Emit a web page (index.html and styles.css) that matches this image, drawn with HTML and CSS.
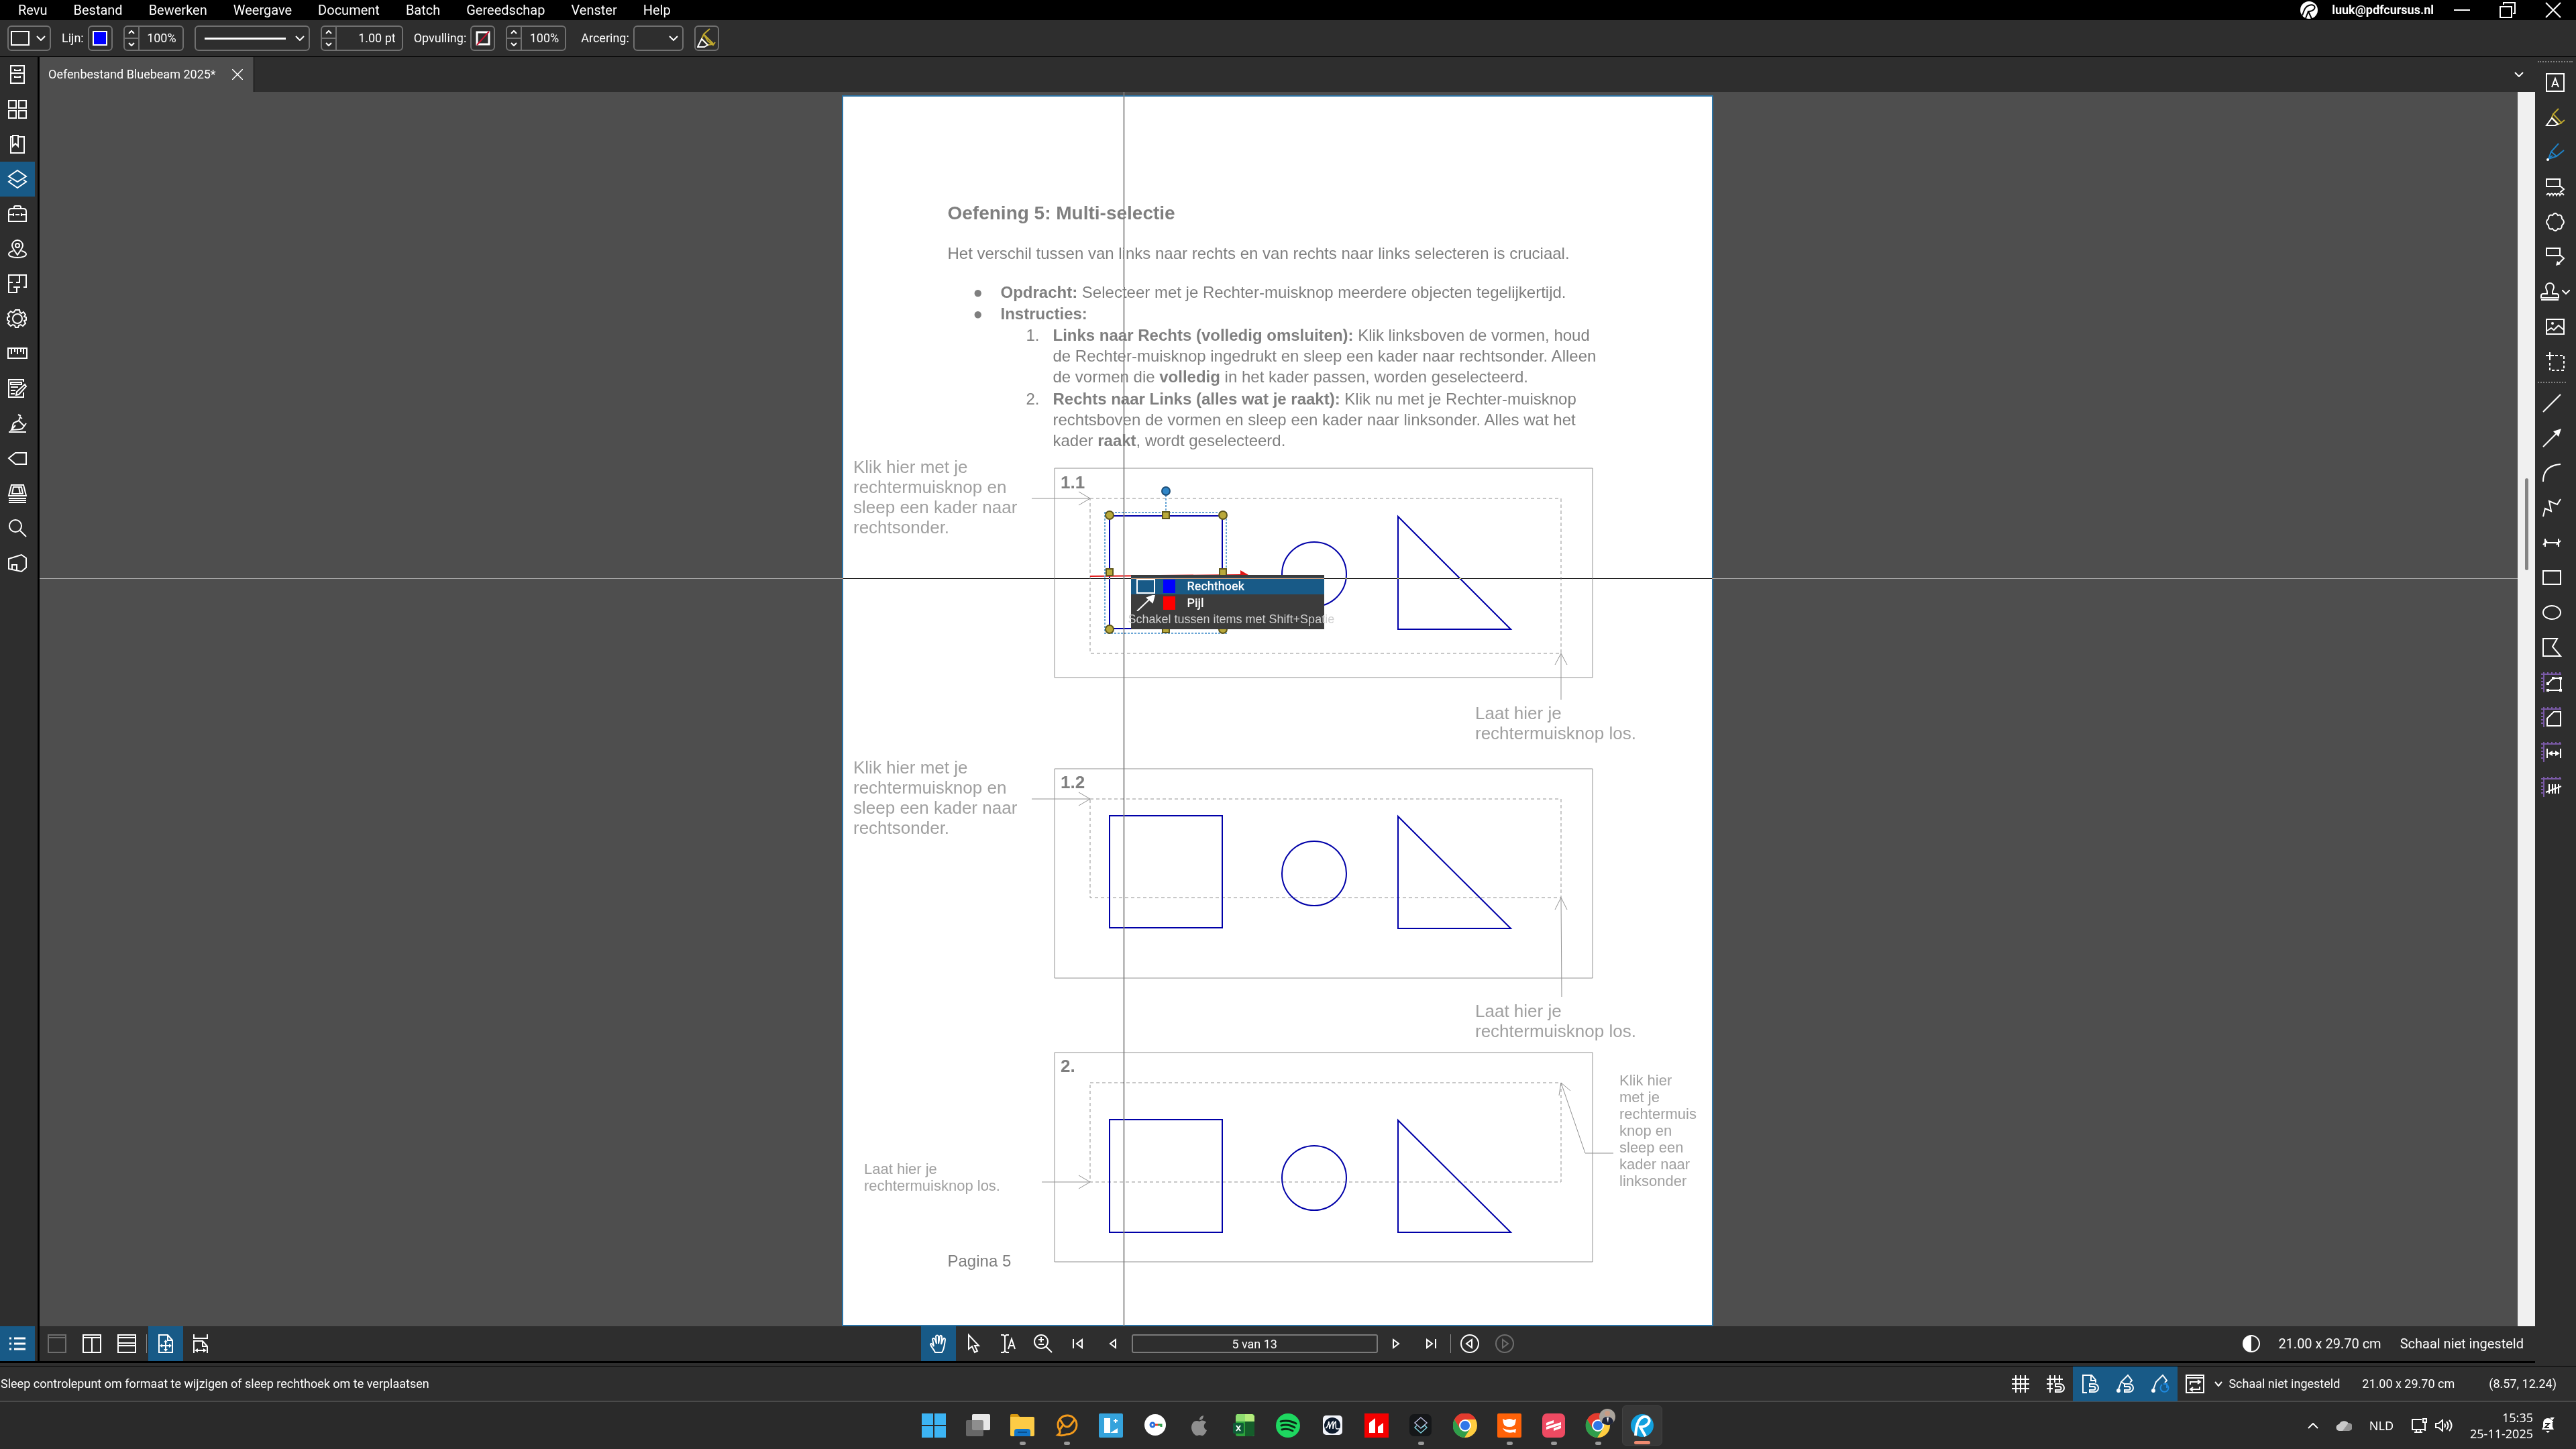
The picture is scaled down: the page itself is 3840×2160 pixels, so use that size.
FILE: index.html
```html
<!DOCTYPE html>
<html lang="nl">
<head>
<meta charset="utf-8">
<title>Oefenbestand Bluebeam 2025*</title>
<link rel="stylesheet" href="styles.css">
</head>
<body>
<header class="menubar">
  <nav class="menus" aria-label="Menu">
    <button>Revu</button><button>Bestand</button><button>Bewerken</button><button>Weergave</button><button>Document</button><button>Batch</button><button>Gereedschap</button><button>Venster</button><button>Help</button>
  </nav>
  <div class="account">
    <svg width="26" height="26" viewBox="0 0 26 26"><circle cx="13" cy="13" r="13" fill="#fff"/><path d="M3 21C6 13 7 8 13 6c6-2 10 1 8 5-2 3-6 4-9 4l5 11M8 25l4-10" fill="none" stroke="#000" stroke-width="2"/></svg>
    <span>luuk@pdfcursus.nl</span>
  </div>
  <div class="window-buttons">
    <button aria-label="Minimaliseren"><svg width="24" height="24" viewBox="0 0 24 24"><path d="M0 12h24" stroke-width="2"/></svg></button>
    <button aria-label="Herstellen"><svg width="24" height="24" viewBox="0 0 24 24"><path d="M1 7h17v16H1zM6 4V1h17v16h-3" stroke-width="2"/></svg></button>
    <button aria-label="Sluiten"><svg width="24" height="24" viewBox="0 0 24 24"><path d="M1 1l22 22M23 1L1 23" stroke-width="2"/></svg></button>
  </div>
</header>

<div class="propbar">
  <button class="field shape-pick" aria-label="Vorm"><svg width="28" height="24" viewBox="0 0 28 24"><path d="M1 2h26v20H1z" stroke-width="2"/></svg><svg class="chev" width="14" height="8" viewBox="0 0 14 8"><path d="M1 1l6 6 6-6"/></svg></button>
  <div class="group">
    <label for="line-color">Lijn:</label>
    <button class="field swatch" id="line-color"><svg width="22" height="22" viewBox="0 0 22 22"><path d="M1 1h20v20H1z" fill="#00f" stroke-width="2"/></svg></button>
  </div>
  <div class="field spinner">
    <div class="steps"><button aria-label="Meer"><svg width="10" height="6" viewBox="0 0 10 6"><path d="M1 5l4-4 4 4"/></svg></button><button aria-label="Minder"><svg width="10" height="6" viewBox="0 0 10 6"><path d="M1 1l4 4 4-4"/></svg></button></div>
    <input class="pct" value="100%" aria-label="Dekking lijn">
  </div>
  <button class="field line-style" aria-label="Lijnstijl"><span class="line-sample"></span><svg class="chev" width="14" height="8" viewBox="0 0 14 8"><path d="M1 1l6 6 6-6"/></svg></button>
  <div class="field spinner">
    <div class="steps"><button aria-label="Dikker"><svg width="10" height="6" viewBox="0 0 10 6"><path d="M1 5l4-4 4 4"/></svg></button><button aria-label="Dunner"><svg width="10" height="6" viewBox="0 0 10 6"><path d="M1 1l4 4 4-4"/></svg></button></div>
    <input class="pts" value="1.00 pt" aria-label="Lijndikte">
  </div>
  <div class="group">
    <label for="fill-color">Opvulling:</label>
    <button class="field swatch" id="fill-color"><svg width="22" height="22" viewBox="0 0 22 22"><path d="M2 2h18v18H2z" stroke-width="3"/><path d="M2 21L20 1" stroke="#c8102e" stroke-width="2"/></svg></button>
  </div>
  <div class="field spinner">
    <div class="steps"><button aria-label="Meer"><svg width="10" height="6" viewBox="0 0 10 6"><path d="M1 5l4-4 4 4"/></svg></button><button aria-label="Minder"><svg width="10" height="6" viewBox="0 0 10 6"><path d="M1 1l4 4 4-4"/></svg></button></div>
    <input class="pct" value="100%" aria-label="Dekking opvulling">
  </div>
  <div class="group hatch">
    <label for="hatch">Arcering:</label>
    <div class="select-wrap"><select class="field" id="hatch"><option></option></select><svg class="chev" width="14" height="8" viewBox="0 0 14 8"><path d="M1 1l6 6 6-6"/></svg></div>
  </div>
  <button class="field swatch" aria-label="Markeren"><svg width="28" height="30" viewBox="0 0 28 30"><path d="M19 1l-9 8 6 10 8 6 3-4M10 9l-3 7 9 9 8-1M10 9l14 14" stroke="#c0a92e"/><path d="M7 16L1 28h10l5-3z"/></svg></button>
</div>

<main class="workspace">
  <aside class="panels" aria-label="Deelvensters">
    <button aria-label="Bestandstoegang"><svg class="ic" viewBox="0 0 28 28"><path d="M4 1h20v26H4zM4 12h20M10 6v2h8V6M10 16v2h8v-2"/></svg></button>
    <button aria-label="Miniaturen"><svg class="ic" viewBox="0 0 28 28"><path d="M1 1h11v11H1zM16 1h11v11H16zM1 16h11v11H1zM16 16h11v11H16z"/></svg></button>
    <button aria-label="Bladwijzers"><svg class="ic" viewBox="0 0 28 28"><path d="M7 3H4v24h20V3h-9M7 1h8v16l-4-4-4 4z"/></svg></button>
    <button class="on" aria-label="Lagen"><svg class="ic" viewBox="0 0 28 28"><path d="M14 1l13 9-13 8L1 10zM5 15l-4 3 13 9 13-9-4-3"/></svg></button>
    <button aria-label="Gereedschapskist"><svg class="ic" viewBox="0 0 28 28"><path d="M1 25V10q0-4 4-4h18q4 0 4 4v15zM9 6V4q0-2 2-2h6q2 0 2 2v2M1 15h6m4 0h6m4 0h6M8 13v4M20 13v4"/></svg></button>
    <button aria-label="Plaatsen"><svg class="ic" viewBox="0 0 28 28"><path d="M14 23C9 16 6 12 6 9a8 8 0 0 1 16 0c0 3-3 7-8 14z"/><circle cx="14" cy="9" r="3"/><path d="M8 17c-4 1-7 3-7 5 0 3 6 5 13 5s13-2 13-5c0-2-3-4-7-5"/></svg></button>
    <button aria-label="Ruimten"><svg class="ic" viewBox="0 0 28 28"><path d="M23 19h4V1H1v11h6M12 12h5V1M1 12v15h12v-8M8 19h10"/></svg></button>
    <button aria-label="Eigenschappen"><svg class="ic" viewBox="0 0 28 28"><path d="M11 1h6l1 4 2 1 3-2 3 4-2 3 3 1v4l-3 1 2 4-4 4-3-2-3 1-1 3h-4l-1-3-3-1-3 2-4-4 2-3-3-2v-4l3-1-2-4 4-4 3 2 2-1z"/><circle cx="14" cy="14" r="7"/></svg></button>
    <button aria-label="Metingen"><svg class="ic" viewBox="0 0 28 28"><path d="M0 6h28v15H0zM5 6v9M10 6v6M14 6v9M19 6v6M23 6v9"/></svg></button>
    <button aria-label="Formulieren"><svg class="ic" viewBox="0 0 28 28"><path d="M23 4V1H1v26h22v-7M4 5h16v3H4zM4 12h11M4 17h7M4 22h6M12 24l1-5L25 8l2 3-11 12z"/></svg></button>
    <button aria-label="Handtekeningen"><svg class="ic" viewBox="0 0 28 28"><path d="M1 27h26M5 24c3-5 1-8 4-11l7-3 8 8-3 4c-4 2-10 1-16 2l6-7M16 10l2-5 3 2M19 3l-4-2M24 18l3-4"/></svg></button>
    <button aria-label="Vlaggen"><svg class="ic" viewBox="0 0 28 28"><path d="M1 14l10-8h16v17H11z"/></svg></button>
    <button aria-label="Sets"><svg class="ic" viewBox="0 0 28 28"><path d="M5 2h18l4 16H1zM8 5h12l2 10H6zM16 5l2 10M1 22h26M1 25h26M1 28h26"/></svg></button>
    <button aria-label="Zoeken"><svg class="ic" viewBox="0 0 28 28"><circle cx="11" cy="11" r="9"/><path d="M18 18l9 9"/></svg></button>
    <button aria-label="3D-model"><svg class="ic" viewBox="0 0 28 28"><path d="M1 8l19-6 7 5v14l-7 6-19-4zM6 24v-7h7v8"/></svg></button>
    <button class="on list-toggle" aria-label="Lijst"><svg class="ic" viewBox="0 0 28 28"><path d="M2 6h3m4 0h17M2 14h3m4 0h17M2 22h3m4 0h17" stroke-width="3"/></svg></button>
  </aside>

  <section class="center">
    <div class="tabs">
      <div class="tab"><span>Oefenbestand Bluebeam 2025*</span><button aria-label="Tabblad sluiten"><svg width="16" height="16" viewBox="0 0 16 16"><path d="M0 0l16 16M16 0L0 16" stroke-width="1.5"/></svg></button></div>
      <button class="tab-menu" aria-label="Alle tabbladen"><svg width="14" height="8" viewBox="0 0 14 8"><path d="M1 1l6 6 6-6"/></svg></button>
    </div>

    <div class="viewer">
      <div class="canvas">
        <article class="sheet">
          <h1>Oefening 5: Multi-selectie</h1>
          <p class="intro">Het verschil tussen van links naar rechts en van rechts naar links selecteren is cruciaal.</p>
          <ul>
            <li><div><b>Opdracht:</b> Selecteer met je Rechter-muisknop meerdere objecten tegelijkertijd.</div></li>
            <li><div><b>Instructies:</b></div></li>
          </ul>
          <ol>
            <li><div><b>Links naar Rechts (volledig omsluiten):</b> Klik linksboven de vormen, houd<br>de Rechter-muisknop ingedrukt en sleep een kader naar rechtsonder. Alleen<br>de vormen die <b>volledig</b> in het kader passen, worden geselecteerd.</div></li>
            <li><div><b>Rechts naar Links (alles wat je raakt):</b> Klik nu met je Rechter-muisknop<br>rechtsboven de vormen en sleep een kader naar linksonder. Alles wat het<br>kader <b>raakt</b>, wordt geselecteerd.</div></li>
          </ol>
          <footer>Pagina 5</footer>

          <svg class="markups" viewBox="1254 142 1299 1835">
            <g class="frame">
              <path d="M1571 698h802v312h-802zM1571 1146h802v312h-802zM1571 1569h802v312h-802z"/>
              <path class="dash" d="M1624 743h702v231h-702zM1624 1191h702v147h-702zM1624 1614h702v148h-702z"/>
              <path d="M1537 743h87M1607 733l17 10-17 10M1537 1191h87M1607 1181l17 10-17 10M1552 1762h72M1607 1752l17 10-17 10"/>
              <path d="M2326 974v69M2317 991l9-17 9 17M2326 1338l1 148M2317 1356l9-18 9 18M2404 1719h-42l-36-105M2323 1633l3-19 14 12"/>
            </g>
            <g class="shapes">
              <path d="M1653 769h168v168h-168zM1653 1216h168v167h-168zM1653 1669h168v168h-168z"/>
              <circle cx="1958" cy="856" r="48"/><circle cx="1958" cy="1302" r="48"/><circle cx="1958" cy="1756" r="48"/>
              <path d="M2083 770v168h168zM2083 1217v167h168zM2083 1670v167h168z"/>
            </g>
            <g class="tag"><text x="1580" y="728">1.1</text><text x="1580" y="1175">1.2</text><text x="1580" y="1598">2.</text></g>
            <g class="note">
              <text><tspan x="1271" y="705">Klik hier met je</tspan><tspan x="1271" y="735">rechtermuisknop en</tspan><tspan x="1271" y="765">sleep een kader naar</tspan><tspan x="1271" y="795">rechtsonder.</tspan></text>
              <text><tspan x="2198" y="1072">Laat hier je</tspan><tspan x="2198" y="1102">rechtermuisknop los.</tspan></text>
              <text><tspan x="1271" y="1153">Klik hier met je</tspan><tspan x="1271" y="1183">rechtermuisknop en</tspan><tspan x="1271" y="1213">sleep een kader naar</tspan><tspan x="1271" y="1243">rechtsonder.</tspan></text>
              <text><tspan x="2198" y="1516">Laat hier je</tspan><tspan x="2198" y="1546">rechtermuisknop los.</tspan></text>
            </g>
            <g class="note small">
              <text><tspan x="1287" y="1750">Laat hier je</tspan><tspan x="1287" y="1775">rechtermuisknop los.</tspan></text>
              <text><tspan x="2413" y="1618">Klik hier</tspan><tspan x="2413" y="1643">met je</tspan><tspan x="2413" y="1668">rechtermuis</tspan><tspan x="2413" y="1693">knop en</tspan><tspan x="2413" y="1718">sleep een</tspan><tspan x="2413" y="1743">kader naar</tspan><tspan x="2413" y="1768">linksonder</tspan></text>
            </g>
            <path d="M1624 859l224-2" stroke="#e01818"/><path d="M1848 850l12 7-12 7z" fill="#e01818"/>
            <path d="M1646 764h181v180h-181zM1737 738v25" fill="none" stroke="#6aa6d6" stroke-dasharray="3 2"/>
            <circle cx="1737" cy="732" r="6" fill="#2f86c8" stroke="#1d4e78"/>
            <g fill="#b9a93a" stroke="#5f571c">
              <circle cx="1653" cy="768" r="6"/><circle cx="1822" cy="768" r="6"/><circle cx="1653" cy="938" r="6"/><circle cx="1822" cy="938" r="6"/>
              <path d="M1732 763h10v10h-10zM1732 933h10v10h-10zM1648 848h10v10h-10zM1817 848h10v10h-10z"/>
            </g>
          </svg>

          <div class="picker" role="listbox" aria-label="Items">
            <div class="item current" role="option"><svg width="28" height="24" viewBox="0 0 28 24"><path d="M1 2h26v20H1z"/></svg><i class="chip blue"></i>Rechthoek</div>
            <div class="item" role="option"><svg width="28" height="24" viewBox="0 0 28 24"><path d="M1 24L20 6"/><path d="M27 0l-3 11-8-7z" fill="#fff"/></svg><i class="chip red"></i>Pijl</div>
            <div class="hint">Schakel tussen items met Shift+Spatie</div>
          </div>
        </article>
        <div class="cross-v"></div>
        <div class="cross-h"></div>
      </div>
      <div class="scrollbar"><div class="thumb"></div></div>
    </div>

    <div class="navbar">
      <div class="tiles">
        <button class="dim" aria-label="Niet splitsen"><svg class="ic" viewBox="0 0 28 28"><path d="M1 1h26v26H1zM1 5h26"/></svg></button>
        <button aria-label="Verticaal splitsen"><svg class="ic" viewBox="0 0 28 28"><path d="M1 1h26v26H1zM1 5h26M14 5v22"/></svg></button>
        <button aria-label="Horizontaal splitsen"><svg class="ic" viewBox="0 0 28 28"><path d="M1 1h26v26H1zM1 5h26M1 13h26M1 17h26"/></svg></button>
        <span class="sep"></span>
        <button class="on" aria-label="Pagina passend"><svg class="ic" viewBox="0 0 28 28"><path d="M4 1h13l7 8v18H4zM17 1v8h7M14 11v12M8 17h12"/><path d="M14 8l3 4h-6zM14 26l3-4h-6zM5 17l4-3v6zM23 17l-4-3v6z" class="solid"/></svg></button>
        <button aria-label="Breedte passend"><svg class="ic" viewBox="0 0 28 28"><path d="M4 0v6h20V0M4 28V10h13l7 8v10M17 10v8h7M8 24h12"/><path d="M5 24l5-3v6zM23 24l-5-3v6z" class="solid"/></svg></button>
      </div>
      <div class="tiles">
        <button class="on" aria-label="Pannen"><svg class="ic" viewBox="0 0 28 28"><path d="M9 27c-2-5-6-8-7-12 1-2 3-1 5 3L5 7c1-2 3-1 4 1l2 6-1-11c1-2 3-2 4 0v11l2-11c1-2 3-1 3 1l-1 11 3-8c1-2 3-1 3 1-1 6-1 14-5 19z"/></svg></button>
        <button aria-label="Selecteren"><svg class="ic" viewBox="0 0 28 28"><path d="M7 1v21l5-4 4 9 4-2-4-8h6z"/></svg></button>
        <button aria-label="Tekst selecteren"><svg class="ic" viewBox="0 0 28 28"><path d="M3 1h4l2 2 2-2h4M3 27h4l2-2 2 2h4M9 2v24M14 22l5-15 5 15M16 17h6"/></svg></button>
        <button aria-label="Zoomen"><svg class="ic" viewBox="0 0 28 28"><circle cx="11" cy="11" r="10"/><path d="M18 18l9 9M11 4v8M7 8h8M7 15h8"/></svg></button>
        <button aria-label="Eerste pagina"><svg class="ic" viewBox="0 0 28 28"><path d="M7 7v14M20 8v12l-8-6z"/></svg></button>
        <button aria-label="Vorige pagina"><svg class="ic" viewBox="0 0 28 28"><path d="M18 8v12l-8-6z"/></svg></button>
        <input class="page-box" value="5 van 13" aria-label="Pagina">
        <button aria-label="Volgende pagina"><svg class="ic" viewBox="0 0 28 28"><path d="M10 8v12l8-6z"/></svg></button>
        <button aria-label="Laatste pagina"><svg class="ic" viewBox="0 0 28 28"><path d="M21 7v14M8 8v12l8-6z"/></svg></button>
        <span class="sep"></span>
        <button aria-label="Vorige weergave"><svg class="ic" viewBox="0 0 28 28"><circle cx="14" cy="14" r="13"/><path d="M17 8v12l-8-6z"/></svg></button>
        <button class="dim" aria-label="Volgende weergave"><svg class="ic" viewBox="0 0 28 28"><circle cx="14" cy="14" r="13"/><path d="M11 8v12l8-6z"/></svg></button>
      </div>
      <div class="tiles sizes">
        <button aria-label="Pagina dimmen"><svg class="ic" viewBox="0 0 28 28"><circle cx="14" cy="14" r="12"/><path d="M14 2a12 12 0 0 0 0 24z" class="solid"/></svg></button>
        <span>21.00 x 29.70 cm</span><span>Schaal niet ingesteld</span>
      </div>
    </div>
  </section>

  <aside class="tools" aria-label="Gereedschappen">
    <div class="tool-group wide">
      <button aria-label="Tekstvak"><svg class="ic" viewBox="0 0 28 28"><path d="M1 1h26v26H1zM9 21l5-13 5 13M11 17h6"/></svg></button>
      <button aria-label="Markeren"><svg class="ic" viewBox="0 0 28 28"><path d="M19 1l-8 8 12 13 5-4M11 9l-2 5 10 10 5-2" stroke="#c0a92e"/><path d="M9 15l-8 11h13l4-2z"/></svg></button>
      <button aria-label="Pen"><svg class="ic" viewBox="0 0 28 28"><path d="M19 1L8 13 4 24l12-4L27 11M8 13l8 7M5 22l5-3" stroke="#1f83c8"/><circle cx="3" cy="25" r="2" class="solid"/></svg></button>
      <button aria-label="Schrijfmachine"><svg class="ic" viewBox="0 0 28 28"><path d="M1 2h20v11H1zM21 12l6 5-6 5M1 26q3-5 5 0 3-5 5 0 3-5 5 0 3-5 5 0 3-5 6 0"/></svg></button>
      <button aria-label="Wolk"><svg class="ic" viewBox="0 0 28 28"><path d="M10 4q4-6 8 0 6-2 6 5 6 5 0 10 0 7-6 5-4 6-8 0-6 2-6-5-6-5 0-10 0-7 6-5z"/></svg></button>
      <button aria-label="Bijschrift"><svg class="ic" viewBox="0 0 28 28"><path d="M1 1h20v11H1zM21 11l6 5-8 8"/><path d="M15 27l2-7 5 5z" class="solid"/></svg></button>
      <button class="with-menu" aria-label="Stempel"><svg class="ic" viewBox="0 0 28 28"><path d="M10 17v-3c0-3-2-4-2-7a6 6 0 0 1 12 0c0 3-2 4-2 7v3h6q3 0 3 3v3H1v-3q0-3 3-3zM1 26h26"/></svg><svg width="12" height="7" viewBox="0 0 12 7"><path d="M0 0l6 6 6-6"/></svg></button>
      <button aria-label="Afbeelding"><svg class="ic" viewBox="0 0 28 28"><path d="M1 3h26v22H1zM2 20l6-4 4 3 7-7 8 7"/><circle cx="10" cy="9" r="2" class="solid"/></svg></button>
      <button aria-label="Bijsnijden"><svg class="ic" viewBox="0 0 28 28"><path d="M0 5h12M6 0v12"/><path d="M14 5h13v22H6V13" stroke-dasharray="4 3"/></svg></button>
    </div>
    <div class="tool-group">
      <button aria-label="Lijn"><svg class="ic" viewBox="0 0 28 28"><path d="M1 27L27 1"/></svg></button>
      <button aria-label="Pijl"><svg class="ic" viewBox="0 0 28 28"><path d="M1 27L20 8"/><path d="M28 0l-4 12-8-8z" class="solid"/></svg></button>
      <button aria-label="Boog"><svg class="ic" viewBox="0 0 28 28"><path d="M1 27Q1 3 27 1"/></svg></button>
      <button aria-label="Polylijn"><svg class="ic" viewBox="0 0 28 28"><path d="M1 27l3-12 9 4-3-15 12 5 5-8"/></svg></button>
      <button aria-label="Maatlijn"><svg class="ic" viewBox="0 0 28 28"><path d="M4 8v12M24 8v12M4 14h20M1 17l6-6M21 17l6-6"/></svg></button>
      <button aria-label="Rechthoek"><svg class="ic" viewBox="0 0 28 28"><path d="M1 4h26v20H1z"/></svg></button>
      <button aria-label="Ellips"><svg class="ic" viewBox="0 0 28 28"><ellipse cx="14" cy="14" rx="13" ry="10"/></svg></button>
      <button aria-label="Veelhoek"><svg class="ic" viewBox="0 0 28 28"><path d="M1 1h21l-7 12 12 14H1z"/></svg></button>
      <button aria-label="Polylengte meten"><svg class="ic" viewBox="0 0 28 28"><path d="M2 -1v30M-2 2h30M-2 8h4M-2 13h4M-2 18h4M-2 23h4M8 -1v3M14 -1v3M20 -1v3M26 -1v3" stroke="#7a5aa6"/><path d="M8 16l8-8h11v18H8"/><path d="M6 14h4v4H6zM14 6h4v4h-4zM25 6h4v4h-4zM25 24h4v4h-4zM6 24h4v4H6z" class="solid"/></svg></button>
      <button aria-label="Oppervlakte meten"><svg class="ic" viewBox="0 0 28 28"><path d="M2 -1v30M-2 2h30M-2 8h4M-2 13h4M-2 18h4M-2 23h4M8 -1v3M14 -1v3M20 -1v3M26 -1v3" stroke="#7a5aa6"/><path d="M7 27V16L17 6h10v21z"/></svg></button>
      <button aria-label="Lengte meten"><svg class="ic" viewBox="0 0 28 28"><path d="M2 -1v30M-2 2h30M-2 8h4M-2 13h4M-2 18h4M-2 23h4M8 -1v3M14 -1v3M20 -1v3M26 -1v3" stroke="#7a5aa6"/><path d="M7 9v14M27 9v14M10 16h14"/><path d="M8 16l7-4v8zM26 16l-7-4v8z" class="solid"/></svg></button>
      <button aria-label="Aantal meten"><svg class="ic" viewBox="0 0 28 28"><path d="M2 -1v30M-2 2h30M-2 8h4M-2 13h4M-2 18h4M-2 23h4M8 -1v3M14 -1v3M20 -1v3M26 -1v3" stroke="#7a5aa6"/><path d="M10 10v14M15 10v14M19 10v14M24 10v14M5 22l23-9"/></svg></button>
    </div>
  </aside>
</main>

<div class="statusbar">
  <span>Sleep controlepunt om formaat te wijzigen of sleep rechthoek om te verplaatsen</span>
  <div class="tiles status-right">
    <button aria-label="Raster tonen"><svg class="ic" viewBox="0 0 28 28"><path d="M7 1v26M14 1v26M21 1v26M1 7h26M1 14h26M1 21h26"/></svg></button>
    <button aria-label="Uitlijnen op raster"><svg class="ic" viewBox="0 0 28 28"><path d="M6 1v26M13 1v11M20 1v11M1 7h24M1 14h9M1 21h9"/><path d="M14 14h7a5 5 0 0 1 0 12h-7v-3h6a2 2 0 0 0 0-5h-6z"/></svg></button>
    <button class="on" aria-label="Uitlijnen op inhoud"><svg class="ic" viewBox="0 0 28 28"><path d="M9 27H3V1h13l6 7v4M15 1v8h7"/><path d="M13 14h7a5 5 0 0 1 0 12h-7v-3h6a2 2 0 0 0 0-5h-6z"/></svg></button>
    <button class="on" aria-label="Uitlijnen op opmerkingen"><svg class="ic" viewBox="0 0 28 28"><path d="M4 22l4-11L18 1l6 8-3 3M8 11l5 3"/><circle cx="4" cy="24" r="3" class="solid"/><path d="M13 14h7a5 5 0 0 1 0 12h-7v-3h6a2 2 0 0 0 0-5h-6z"/></svg></button>
    <button class="on" aria-label="Hergebruiken"><svg class="ic" viewBox="0 0 28 28"><path d="M4 22l4-11L18 1l6 8-3 3"/><circle cx="4" cy="24" r="3" class="solid"/><path d="M17 15a6 6 0 1 0 7 0M24 20v-6h-5" stroke="#1f8ae0"/></svg></button>
    <button aria-label="Synchroniseren"><svg class="ic" viewBox="0 0 28 28"><path d="M1 1h26v26H1zM1 5h26M7 15v-4h14M18 8l4 3-4 3M21 18v4H8M11 19l-4 3 4 3"/></svg></button>
    <button class="scale"><svg width="12" height="8" viewBox="0 0 12 8"><path d="M1 1l5 6 5-6"/></svg>Schaal niet ingesteld</button>
    <span class="dims">21.00 x 29.70 cm</span>
    <span>(8.57, 12.24)</span>
  </div>
</div>

<footer class="taskbar">
  <div></div>
  <div class="apps">
    <button aria-label="Start"><svg viewBox="0 0 36 36"><path d="M0 0h17v17H0zM19 0h17v17H19zM0 19h17v17H0zM19 19h17v17H19z" fill="#3cb4f4"/></svg></button>
    <button aria-label="Taakweergave"><svg viewBox="0 0 36 36"><rect x="9" y="1" width="27" height="24" rx="2" fill="#e8e8e8"/><rect x="0" y="10" width="26" height="24" rx="2" fill="#777" fill-opacity=".8"/></svg></button>
    <button class="run" aria-label="Verkenner"><svg viewBox="0 0 36 36"><path d="M0 3q0-2 2-2h9l4 5H0z" fill="#d99a10"/><path d="M0 5h34q2 0 2 2v25q0 2-2 2H2q-2 0-2-2z" fill="#fdcb45"/><path d="M6 34V27q0-4 4-4h16q4 0 4 4v7z" fill="#1276c8"/><path d="M11 28h14" stroke="#0a4f8c" stroke-width="2"/></svg></button>
    <button class="run" aria-label="E-mail"><svg viewBox="0 0 36 36"><path d="M7 24a13 13 0 0 1-2-8 14 14 0 1 1 13 15c-4 2-9 2-13 1 3-2 4-5 2-8z" fill="none" stroke="#f29a1c" stroke-width="3"/><path d="M8 9l5 8q6 6 11 0l6-8M13 17l-6 8" fill="none" stroke="#f29a1c" stroke-width="3"/></svg></button>
    <button aria-label="Notities"><svg viewBox="0 0 36 36"><rect width="36" height="36" rx="2" fill="#35a3dc"/><path d="M8 7h9v22H8zM17 29h11v-7z" fill="#fff"/><path d="M25 8v6M22 11h6" stroke="#fff" stroke-width="2"/></svg></button>
    <button aria-label="Wachtwoorden"><svg viewBox="0 0 36 36"><circle cx="18" cy="17" r="16" fill="#fff"/><circle cx="14" cy="17" r="3" fill="none" stroke="#2b6fdc" stroke-width="3"/><path d="M18 17h4" stroke="#e6432d" stroke-width="3"/><path d="M22 17h5v3" fill="none" stroke="#2f9e4b" stroke-width="3"/></svg></button>
    <button aria-label="Apple"><svg viewBox="0 0 36 36"><path d="M18 12c4-3 8-1 10 1-5 4-4 10 1 12-2 5-5 9-8 8-2-1-4-1-6 0-4 1-9-6-9-12 0-8 6-12 12-9zM18 10c0-4 2-6 6-7 0 4-2 7-6 7z" fill="#8e8e8e"/></svg></button>
    <button aria-label="Excel"><svg viewBox="0 0 36 36"><rect x="6" y="1" width="28" height="33" rx="3" fill="#2da33c"/><path d="M8 1h12v11H6V4z" fill="#8edc70"/><path d="M20 1h11l3 3v8H20z" fill="#b5ec7c"/><path d="M20 12h14v20l-3 2H20z" fill="#155e2b"/><rect x="2" y="14" width="16" height="16" rx="2" fill="#0f5c37"/><path d="M7 18l6 8M13 18l-6 8" stroke="#fff" stroke-width="2"/></svg></button>
    <button aria-label="Spotify"><svg viewBox="0 0 36 36"><circle cx="18" cy="18" r="18" fill="#1ed760"/><path d="M7 12q12-3 23 3M8 18q10-3 20 3M9 24q9-2 16 2" fill="none" stroke="#0c2a16" stroke-width="3" stroke-linecap="round"/></svg></button>
    <button aria-label="M"><svg viewBox="0 0 36 36"><rect x="4" y="3" width="29" height="29" rx="5" fill="#f2f4fa"/><circle cx="18" cy="18" r="12" fill="#0d1a2c"/><path d="M8 22c3-1 4-5 5-10l1 11q2-9 5-11v11q1-8 4-11c1 6-1 11 2 11h5" fill="none" stroke="#fff" stroke-width="1.5"/></svg></button>
    <button aria-label="Statistiek"><svg viewBox="0 0 36 36"><path d="M0 0h36v36H0z" fill="#f40000"/><path d="M7 29V14l9-7v22zM20 29V20l8-6v15z" fill="#fff"/></svg></button>
    <button class="run" aria-label="Lagen"><svg viewBox="0 0 36 36"><rect x="1" y="1" width="33" height="33" rx="7" fill="#151719"/><path d="M18 6l9 8-9 8-9-8z" fill="none" stroke="#b7b8d8" stroke-width="1.5"/><path d="M12 18l-3 3 9 8 9-8-3-3-6 4" fill="none" stroke="#7fd0dc" stroke-width="1.5"/></svg></button>
    <button aria-label="Chrome"><svg viewBox="0 0 36 36"><circle cx="18" cy="18" r="18" fill="#ffcd40"/><path d="M2 9A18 18 0 0 1 34 9H18l-8 14z" fill="#e33b2e"/><path d="M2 9a18 18 0 0 0 15 27l9-14-16 0z" fill="#2f9e4b"/><circle cx="18" cy="18" r="9" fill="#fff"/><circle cx="18" cy="18" r="7" fill="#2f77e8"/></svg></button>
    <button class="run" aria-label="Opname"><svg viewBox="0 0 36 36"><rect width="36" height="36" rx="2" fill="#ff6208"/><path d="M8 8l4 2q6-4 12 0l4-2-1 6q-1 6-9 6t-9-6zM8 22q10 5 20 1l-1 6-3-1q-11 3-16-6z" fill="#fff"/></svg></button>
    <button class="run" aria-label="Strepen"><svg viewBox="0 0 36 36"><rect x="1" width="34" height="36" rx="7" fill="#ee4a62"/><path d="M7 14l11-4v4l-11 4zM7 20l22-7v4L7 24zM18 22l11-4v4l-11 4z" fill="#fff"/></svg></button>
    <button class="run" aria-label="Chrome profiel"><svg viewBox="0 0 36 36" overflow="visible"><circle cx="18" cy="18" r="18" fill="#ffcd40"/><path d="M2 9A18 18 0 0 1 34 9H18l-8 14z" fill="#e33b2e"/><path d="M2 9a18 18 0 0 0 15 27l9-14-16 0z" fill="#2f9e4b"/><circle cx="18" cy="18" r="9" fill="#fff"/><circle cx="18" cy="18" r="7" fill="#2f77e8"/><circle cx="32" cy="5" r="12" fill="#a9a39b"/><path d="M24 14q0-9 8-9t9 8q-7 8-17 1z" fill="#20263a"/><path d="M31 6h3l-1 8z" fill="#fff"/><circle cx="32" cy="0" r="4" fill="#c99c84"/></svg></button>
    <button class="run active" aria-label="Revu"><svg viewBox="0 0 36 36"><circle cx="18" cy="18" r="17" fill="#12a0de"/><path d="M8 33C9 20 11 8 20 5c7-1 11 4 7 10-3 4-8 5-12 5l8 14" fill="none" stroke="#fff" stroke-width="4"/></svg></button>
  </div>
  <div class="tray">
    <svg width="16" height="9" viewBox="0 0 16 9"><path d="M1 8l7-7 7 7"/></svg>
    <svg width="24" height="18" viewBox="0 0 24 18"><path d="M6 17a5 5 0 0 1-1-10 8 8 0 0 1 14-1 6 6 0 0 1 0 11z" fill="#c9c9c9" stroke="none"/><path d="M10 17L19 5a6 6 0 0 1 0 12z" fill="#949494" stroke="none"/></svg>
    <span>NLD</span>
    <span class="net"><svg width="24" height="24" viewBox="0 0 24 24"><path d="M16 3H2v15h19v-5M8 18v4M14 18v4M5 22h12M21 8v12M18 2h5v5h-5z"/></svg>
    <svg width="26" height="20" viewBox="0 0 26 20"><path d="M1 7h4l6-5v16l-6-5H1zM14 7q2 3 0 6M17 4q5 6 0 12M21 2q7 8 0 16"/></svg></span>
    <time>15:35<br>25-11-2025</time>
    <svg width="20" height="24" viewBox="0 0 20 24"><path d="M1 18h18l-2-4V8A7 7 0 0 0 3 8v6zM7 20h6l-3 3z" fill="#fff" stroke="none"/><path d="M6 9h6l-6 6h6" stroke="#2a2a2a"/><path d="M14 1h4l-4 5h4"/></svg>
  </div>
</footer>
</body>
</html>
```
FILE: styles.css
```css
* { box-sizing: border-box; }

body {
  margin: 0;
  height: 100vh;
  display: flex;
  flex-direction: column;
  overflow: hidden;
  background: #2e2e2e;
  color: #fff;
  font: 18px/24px Roboto, "Liberation Sans", sans-serif;
}

button, input, select { font: inherit; color: inherit; background: none; border: 0; padding: 0; margin: 0; }
svg { display: block; flex: none; fill: none; stroke: #fff; stroke-width: 2; }
.ic { width: 28px; height: 28px; overflow: visible; }
.solid { fill: #fff; stroke: none; }

/* Menu bar */
.menubar { height: 30px; flex: none; display: flex; align-items: center; background: #000; padding-left: 8px; }
.menus { display: flex; flex: 1; font-size: 20px; }
.menus button { padding: 0 20px 0 19px; }
.account { display: flex; align-items: center; gap: 21px; font-weight: 700; }
.account svg { stroke: none; }
.window-buttons { display: flex; margin-left: 8px; }
.window-buttons button { width: 68px; display: flex; justify-content: center; }

/* Properties toolbar */
.propbar { height: 55px; flex: none; display: flex; align-items: center; gap: 16px; padding: 0 11px; border-bottom: 1px solid #000; }
.group { display: flex; align-items: center; gap: 6px; }
.field { height: 38px; border: 2px solid #707070; border-radius: 6px; display: flex; align-items: center; }
.shape-pick { width: 65px; justify-content: space-between; padding: 0 6px 0 3px; }
.swatch { width: 37px; justify-content: center; }
.steps { width: 22px; align-self: stretch; display: flex; flex-direction: column; border-right: 2px solid #707070; }
.steps button { flex: 1; display: flex; align-items: center; justify-content: center; }
.steps button + button { border-top: 2px solid #707070; }
.spinner input { text-align: right; padding-right: 9px; }
.pct { width: 64px; }
.pts { width: 97px; }
.line-style { width: 172px; justify-content: space-between; padding: 0 6px 0 13px; }
.line-sample { width: 121px; height: 3px; background: #fff; }
.hatch { margin-left: 6px; }
.select-wrap { display: grid; align-items: center; }
.select-wrap > * { grid-area: 1 / 1; }
.select-wrap select { width: 75px; appearance: none; }
.select-wrap .chev { justify-self: end; margin-right: 8px; pointer-events: none; }

/* Workspace */
.workspace { flex: 1; min-height: 0; display: flex; }
.panels { width: 59px; border-right: 3px solid #000; border-bottom: 3px solid #000; margin-bottom: 4px; display: flex; flex-direction: column; }
.panels button, .tiles button { width: 52px; height: 52px; flex: none; display: flex; align-items: center; justify-content: center; }
.on { background: #185a87; }
.list-toggle { margin-top: auto; }

.center { flex: 1; min-width: 0; display: flex; flex-direction: column; border-bottom: 3px solid #000; margin-bottom: 4px; }
.tabs { height: 52px; flex: none; display: flex; justify-content: space-between; }
.tab { display: flex; align-items: center; gap: 24px; padding: 0 16px 0 13px; background: #4e4e4e; border-right: 1px solid #000; }
.tab-menu { width: 48px; display: flex; align-items: center; justify-content: center; }

.viewer { flex: 1; min-height: 0; display: flex; background: #4e4e4e; }
.canvas { flex: 1; position: relative; overflow: hidden; padding: 5px 4px 0 0; }
.scrollbar { width: 26px; background: #f0f0f0; }
.thumb { width: 5px; height: 137px; margin: 576px auto 0 11px; border-radius: 3px; background: #858585; }
.cross-v, .cross-h { position: absolute; background: #fff; mix-blend-mode: difference; }
.cross-v { left: 1616px; top: 0; bottom: 0; width: 1px; }
.cross-h { top: 725px; left: 0; right: 0; height: 1px; }

/* Document sheet */
.sheet {
  position: relative;
  width: 1299px;
  height: 100%;
  margin: 0 auto;
  padding: 158px 156px 79px;
  display: flex;
  flex-direction: column;
  background: #fff;
  border: 2px solid #2a72a4;
  color: #7f7f7f;
  font: 24px/32px "Liberation Sans", Arial, sans-serif;
}
.sheet h1 { margin: 0; font-size: 28px; }
.intro { margin: 28px 0 26px; }
.sheet ul, .sheet ol { margin: 0; padding: 0 0 0 38px; list-style: none; }
.sheet ol { padding-left: 117px; counter-reset: step; line-height: 31px; }
.sheet li { display: flex; align-items: baseline; white-space: nowrap; }
.sheet ul li::before { content: "●"; flex: none; width: 41px; }
.sheet ol li { counter-increment: step; padding-bottom: 2px; }
.sheet ol li::before { content: counter(step) "."; flex: none; width: 40px; }
.sheet footer { margin-top: auto; }

.markups { position: absolute; inset: -2px; width: 1299px; height: 1835px; stroke: none; }
.markups text { stroke: none; }
.frame { stroke: #919191; stroke-width: 1; }
.dash { stroke-dasharray: 5 4; }
.shapes { stroke: #0000a8; stroke-width: 2; }
.markups path, .markups circle { vector-effect: non-scaling-stroke; }
.tag { font-size: 26px; font-weight: 700; fill: #7f7f7f; }
.note { font-size: 26px; fill: #a0a0a0; }
.small { font-size: 22px; }

.picker { position: absolute; left: 429px; top: 713px; width: 288px; height: 81px; padding-top: 4px; background: #3c3c3c; color: #fff; font: 500 18px/25px Roboto, sans-serif; }
.item { display: flex; align-items: center; height: 25px; padding-left: 8px; white-space: nowrap; }
.current { background: #185a87; }
.chip { width: 18px; height: 20px; margin: 0 18px 0 12px; }
.blue { background: #00f; }
.red { background: #f00; }
.hint { margin-left: -4px; color: #cfcfcf; white-space: nowrap; font: 18px/24px "Liberation Sans", Arial, sans-serif; }

/* Navigation bar */
.navbar { height: 52px; flex: none; display: flex; justify-content: space-between; }
.tiles { display: flex; align-items: center; }
.dim { opacity: .3; }
.sep { width: 1px; height: 28px; margin: 0 2px 0 3px; background: #8a8a8a; }
.page-box { width: 367px; height: 28px; margin: 0 1px 0 2px; border: 2px solid #7a7a7a; border-radius: 3px; text-align: center; }
.sizes { font-size: 20px; gap: 28px; padding: 0 17px 0 14px; }
.sizes button { margin-right: -14px; }

/* Right tool strip */
.tools { width: 61px; flex: none; padding: 6px 0 0 4px; }
.tool-group { width: 42px; border-top: 2px dotted #808080; padding-top: 4px; }
.wide { width: 52px; }
.tool-group + .tool-group { margin-top: 4px; }
.tool-group button { width: 100%; height: 52px; display: flex; align-items: center; justify-content: center; }
.tool-group .with-menu { gap: 4px; }

/* Status bar */
.statusbar { height: 54px; flex: none; display: flex; align-items: center; justify-content: space-between; border-top: 1px solid #000; border-bottom: 2px solid #4a4a4a; padding: 0 29px 0 1px; }
.tiles .scale { width: auto; gap: 9px; margin-left: 3px; }
.dims { margin: 0 51px 0 33px; }

/* Windows taskbar */
.taskbar { height: 70px; flex: none; display: grid; grid-template-columns: 1fr auto 1fr; align-items: center; background: #2a2a2a; font-family: "Noto Sans", "Open Sans", sans-serif; }
.apps { display: flex; gap: 6px; }
.apps button { width: 60px; height: 60px; border-radius: 6px; position: relative; display: grid; place-items: center; }
.apps svg { width: 36px; height: 36px; stroke: none; }
.apps .run::after { content: ""; position: absolute; bottom: 1px; left: 26px; width: 9px; height: 5px; border-radius: 3px; background: #9a9a9a; }
.apps .active { background: #383838; border: 1px solid #424242; }
.apps .active::after { left: 17px; width: 24px; background: #ef8a70; }
.tray { justify-self: end; display: flex; align-items: center; gap: 26px; padding-right: 32px; }
.net { display: flex; align-items: center; gap: 12px; }
.tray time { text-align: right; }
.tray time + svg { margin-left: -14px; }
```
